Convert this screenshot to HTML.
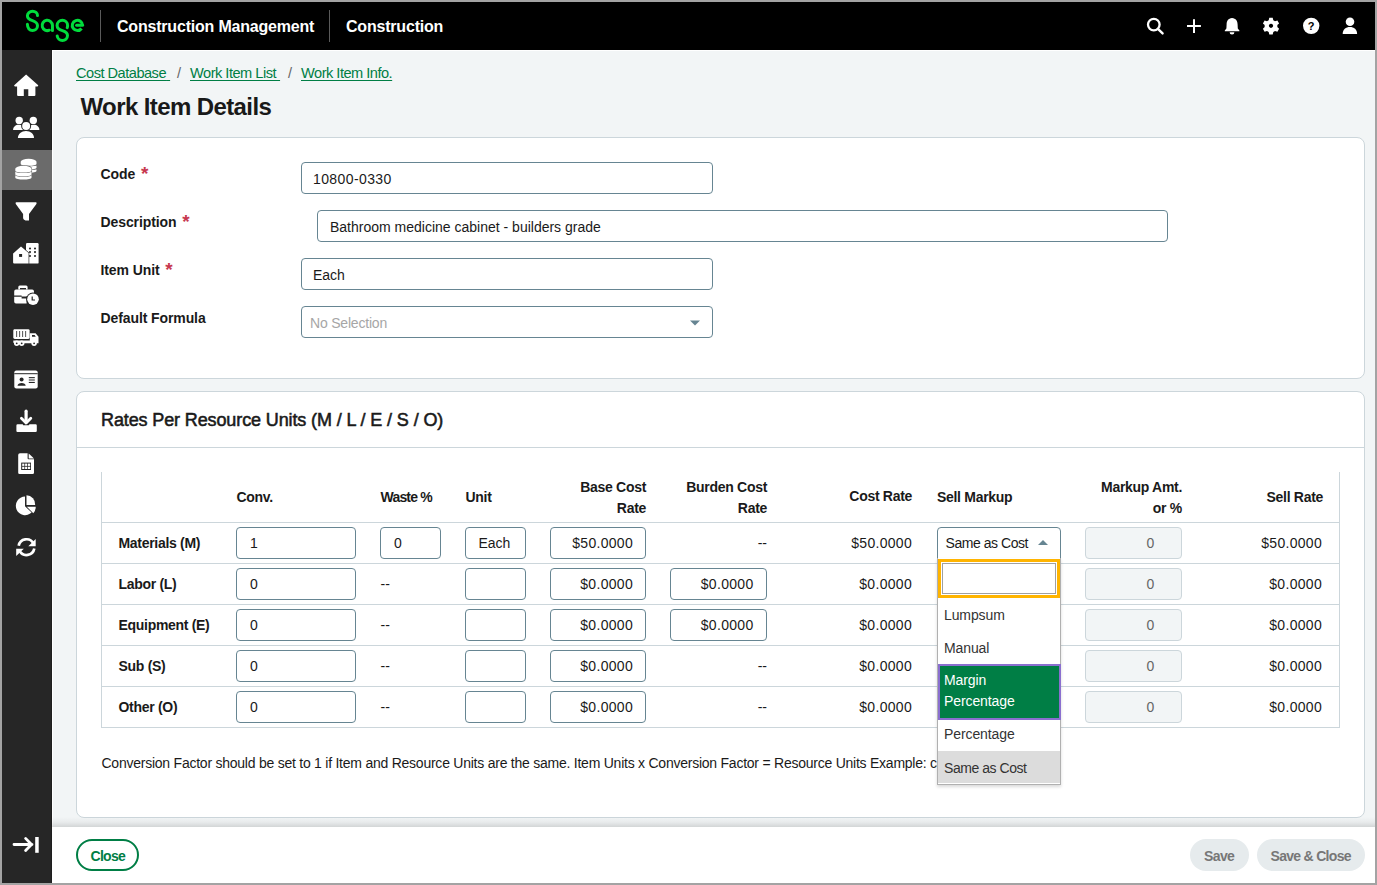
<!DOCTYPE html>
<html><head><meta charset="utf-8"><title>Work Item Details</title>
<style>
html,body{margin:0;padding:0;}
body{width:1377px;height:885px;position:relative;overflow:hidden;background:#a3a3a3;font-family:"Liberation Sans",sans-serif;color:#1a1a1a;}
.a{position:absolute;white-space:nowrap;}
#hdr{left:2px;top:2px;width:1373px;height:48px;background:#000;}
#side{left:2px;top:50px;width:50px;height:833px;background:#262626;}
#main{left:52px;top:50px;width:1323px;height:777px;background:#f2f5f6;box-shadow:inset 1px 1px 0 #fff;}
#foot{left:52px;top:827px;width:1323px;height:56px;background:#fff;}
.t14{font-size:14px;line-height:20px;}
.b{font-weight:700;}
.card{background:#fff;border:1px solid #ccd6db;border-radius:8px;box-sizing:border-box;}
.inp{background:#fff;border:1px solid #668592;border-radius:4px;box-sizing:border-box;}
.hl{height:1px;background:#ccd6db;}
.vl{width:1px;background:#ccd6db;}
.lnk{color:#007e45;text-decoration:underline;text-underline-offset:2px;}
.req{color:#c7384f;}
.btn{border-radius:16px;box-sizing:border-box;}
</style></head>
<body>
<div id="hdr" class="a"></div>
<div id="side" class="a"></div>
<div id="main" class="a"></div>
<div id="foot" class="a"></div>
<!-- HEADER -->
<svg class="a" style="left:0;top:0" width="100" height="50" viewBox="0 0 100 50"><g fill="none" stroke="#00dc3c" stroke-width="3" stroke-linecap="round">
<path d="M37.5,15.6 C37.5,13 35.3,11.3 32.5,11.3 C29.7,11.3 27.4,13.2 27.4,15.8 C27.4,18.6 29.6,19.7 32.5,20.6 C35.5,21.6 37.5,23.1 37.5,25.7 C37.5,28.5 35.2,30.5 32.5,30.5 C29.7,30.5 27.4,28.4 27.4,24.3"/>
<path d="M49.3,30.2 A5.15,5.15 0 1 1 52.45,25.35 L52.45,30.5"/>
<path d="M67.2,27.7 C67.5,27 67.6,26.2 67.6,25.4 C67.6,22.5 65.3,20.2 62.4,20.2 C59.5,20.2 57.1,22.5 57.1,25.4 C57.1,28.2 59.2,29.6 62.4,30.6 C65.6,31.6 67.5,33.1 67.5,35.6 C67.5,38.4 65.2,40.5 62.4,40.5 C59.7,40.5 57.5,38.6 57.2,35.9"/>
<path d="M76.6,25.35 L82.55,25.35"/><path d="M82.55,25.35 A5.15,5.15 0 1 0 81.55,28.5" stroke-linecap="butt"/>
</g></svg>
<div class="a" style="left:100px;top:10px;width:1px;height:32px;background:#5a5a5a"></div>
<div class="a" style="left:329px;top:10px;width:1px;height:32px;background:#5a5a5a"></div>
<div class="a b" style="left:117px;top:17px;font-size:16px;line-height:20px;color:#fff;letter-spacing:-0.2px">Construction Management</div>
<div class="a b" style="left:346px;top:17px;font-size:16px;line-height:20px;color:#fff;letter-spacing:-0.2px">Construction</div>
<svg class="a" style="left:1130px;top:0" width="245" height="50" viewBox="1130 0 245 50">
<g fill="none" stroke="#fff" stroke-width="2">
<circle cx="1153.8" cy="24.6" r="5.8" stroke-width="2.3"/>
<path d="M1157.9,28.9 L1162.6,33.4" stroke-linecap="round" stroke-width="2.4"/>
<path d="M1194,19.2 V32.9 M1187,26 H1200.9"/>
</g>
<g fill="#fff">
<path d="M1232,18 C1228.2,18.2 1226.6,21.2 1226.6,24.5 L1226.4,28.6 L1224.8,30.4 L1224.8,31.3 L1239.4,31.3 L1239.4,30.4 L1237.8,28.6 L1237.6,24.5 C1237.6,21.2 1235.9,18.2 1232,18 Z"/>
<path d="M1229.6,32.2 H1234.4 A2.4,2.2 0 0 1 1229.6,32.2 Z"/>
<path d="M1269.3,17.8 h3.4 l0.6,2.4 a6,6 0 0 1 1.7,1 l2.4,-0.7 1.7,2.9 -1.8,1.7 a6,6 0 0 1 0,2 l1.8,1.7 -1.7,2.9 -2.4,-0.7 a6,6 0 0 1 -1.7,1 l-0.6,2.4 h-3.4 l-0.6,-2.4 a6,6 0 0 1 -1.7,-1 l-2.4,0.7 -1.7,-2.9 1.8,-1.7 a6,6 0 0 1 0,-2 l-1.8,-1.7 1.7,-2.9 2.4,0.7 a6,6 0 0 1 1.7,-1 Z M1271,23.7 a2.1,2.1 0 1 0 0.01,0 Z" fill-rule="evenodd"/>
<circle cx="1311.2" cy="25.85" r="8.2"/>
<circle cx="1350" cy="21.8" r="4.3"/>
<path d="M1342.7,33.9 C1342.7,29.6 1345.8,27 1349.9,27 C1354,27 1357.1,29.6 1357.1,33.9 Z"/>
</g>
<text x="1311.2" y="29.6" font-family="Liberation Sans" font-weight="700" font-size="11" text-anchor="middle" fill="#000">?</text>
</svg>

<!-- SIDEBAR -->
<div class="a" style="left:51px;top:50px;width:1px;height:833px;background:#1e1e1e"></div>
<div class="a" style="left:2px;top:150px;width:50px;height:40px;background:#6b6b6b"></div>
<svg class="a" style="left:0;top:50px" width="52" height="833" viewBox="0 50 52 833">
<g fill="#fff">
<!-- home -->
<path d="M26.1,74.4 L38.2,85.3 Q38.4,86.3 37.4,86.6 L35.4,86.6 L35.4,95 Q35.4,96 34.4,96 L28.3,96 L28.3,89.3 L23.8,89.3 L23.8,96 L18.1,96 Q17.1,96 17.1,95 L17.1,86.6 L15,86.6 Q13.9,86.3 14.2,85.3 Z"/>
<!-- people -->
<circle cx="19.2" cy="120.4" r="3.7"/>
<circle cx="33.3" cy="120.4" r="3.7"/>
<path d="M13.1,130 C13.1,126.8 15.6,124.8 18.8,124.8 C22,124.8 24.5,126.8 24.5,130 Z"/>
<path d="M28,130 C28,126.8 30.5,124.8 33.7,124.8 C36.9,124.8 39.4,126.8 39.4,130 Z"/>
<circle cx="26.15" cy="126" r="5" fill="#262626"/>
<circle cx="26.15" cy="126" r="4"/>
<path d="M16.9,138.6 C16.9,133.6 20.8,130 26,130 C31.2,130 35,133.6 35,138.6 Z" fill="#262626"/>
<path d="M17.9,137.9 C17.9,133.9 21.4,131 26,131 C30.6,131 34,133.9 34,137.9 Z"/>
<!-- coins -->
<g stroke="#6b6b6b" stroke-width="1.1" paint-order="stroke">
<path d="M20.7,169.5 L20.7,171.1 A7.9,1.8 0 0 0 36.5,171.1 L36.5,169.5 Z"/>
<path d="M20.7,165.7 L20.7,167.7 A7.9,1.8 0 0 0 36.5,167.7 L36.5,165.7 Z"/>
<path d="M20.7,161.8 L20.7,163.9 A7.9,1.8 0 0 0 36.5,163.9 L36.5,161.8 A7.9,3 0 0 0 20.7,161.8 Z"/>
<path d="M15.3,175.1 L15.3,177.7 A8.1,1.8 0 0 0 31.5,177.7 L31.5,175.1 Z"/>
<path d="M15.3,171.3 L15.3,174.5 A8.1,1.8 0 0 0 31.5,174.5 L31.5,171.3 Z"/>
<path d="M15.3,168.75 L15.3,170.7 A8.1,1.8 0 0 0 31.5,170.7 L31.5,168.75 A8.1,2.9 0 0 0 15.3,168.75 Z"/>
</g>
<!-- filter -->
<path d="M16.3,202.3 Q15,202.6 15.8,204 L23.1,214 L23.1,218.3 Q23.3,219.4 25.5,220.6 L29,220.6 L29,214 L36.4,204 Q37.2,202.6 35.9,202.3 Z"/>
<!-- buildings -->
<rect x="26" y="243" width="12.6" height="20.6" rx="1.2"/>
<path d="M13.1,253.4 L21,246.6 L28.6,253.1 L28.6,263.6 L14.1,263.6 Q13.1,263.6 13.1,262.6 Z" stroke="#262626" stroke-width="1.3" paint-order="stroke"/>
<g fill="#262626"><rect x="19.1" y="254" width="3" height="2.9"/>
<circle cx="30" cy="248.5" r="1.05"/><circle cx="35" cy="248.5" r="1.05"/><circle cx="30" cy="252.1" r="1.05"/><circle cx="35" cy="252.1" r="1.05"/><circle cx="30" cy="256" r="1.05"/><circle cx="35" cy="256" r="1.05"/></g>
<!-- briefcase -->
<path d="M18.3,289.6 L18.3,286.9 Q18.3,285.4 19.8,285.4 L26.1,285.4 Q27.6,285.4 27.6,286.9 L27.6,289.6 L26,289.6 L26,288 L20,288 L20,289.6 Z"/>
<path d="M14.2,291.4 Q14.2,289.6 16,289.6 L32.2,289.6 Q34,289.6 34,291.4 L34,293.5 L26,296.5 L21.6,296.5 L21.6,295.5 L14.2,295.5 Z"/>
<path d="M14.2,296.8 L21.6,296.8 L21.6,298.4 L26.6,298.4 L26.6,303.6 L16,303.6 Q14.2,303.6 14.2,301.8 Z"/>
<circle cx="33" cy="299.2" r="6.8" fill="#262626"/>
<circle cx="33" cy="299.2" r="5.8"/>
<path d="M32.2,296.4 L32.2,300 L35,300" fill="none" stroke="#262626" stroke-width="1.2"/>
<!-- truck -->
<path d="M14.2,329.3 Q13.3,329.3 13.3,330.8 L13.3,337.3 Q13.3,338.9 14.8,338.9 L28.3,338.9 Q29.6,338.9 29.6,337.5 L29.6,330.6 Q29.6,329.3 28.2,329.3 Z"/>
<path d="M13.3,340.5 L29.8,340.5 L29.8,333.2 L35.6,333.2 L38.5,336.7 L38.5,343.2 L14.6,343.2 Q13.3,343.2 13.3,342 Z"/>
<circle cx="16.7" cy="343.3" r="2.7"/><circle cx="21.7" cy="343.3" r="2.7"/><circle cx="34.1" cy="343.3" r="2.7"/>
<g fill="#262626"><circle cx="16.7" cy="343.3" r="0.9"/><circle cx="21.7" cy="343.3" r="0.9"/><circle cx="34.1" cy="343.3" r="0.9"/>
<rect x="16.3" y="331" width="0.8" height="6"/><rect x="19.3" y="331" width="0.8" height="6"/><rect x="22.3" y="331" width="0.8" height="6"/><rect x="25.3" y="331" width="0.8" height="6"/>
<path d="M32,335 L34.6,335 L35.8,336.7 L32,336.7 Z"/></g>
<!-- id card -->
<rect x="14.3" y="370.6" width="23.4" height="17.9" rx="2"/>
<g fill="#262626"><rect x="14.3" y="373.2" width="23.4" height="1"/>
<circle cx="21.6" cy="379.5" r="2"/><path d="M17.5,385.8 Q18,383 21.6,383 Q25.2,383 25.7,385.8 Z"/>
<rect x="28.8" y="377.1" width="6" height="1.1"/><rect x="28.8" y="379.5" width="6" height="1"/><rect x="28.8" y="381.9" width="6" height="1.1"/></g>
<!-- download -->
<path d="M26.1,411.2 L26.1,422" stroke="#fff" stroke-width="3.2" stroke-linecap="round"/>
<path d="M21.4,418.2 L26.1,423 L30.8,418.2" fill="none" stroke="#fff" stroke-width="2.8" stroke-linecap="round" stroke-linejoin="round"/>
<path d="M16.8,424.2 L22.7,424.2 L23.2,425.3 L28.8,425.3 L29.5,424.2 L35.6,424.2 Q36.8,424.2 36.8,425.5 L36.8,430.9 Q36.8,432 35.6,432 L17.5,432 Q16.4,432 16.4,430.9 L16.4,425.5 Q16.4,424.2 17.6,424.2 Z"/>
<!-- spreadsheet -->
<path d="M20,453.2 L27.6,453.2 L27.6,458.3 Q27.6,459.3 28.6,459.3 L34,459.3 L34,472.8 Q34,474.1 32.6,474.1 L19.5,474.1 Q18.2,474.1 18.2,472.8 L18.2,455 Q18.2,453.2 20,453.2 Z"/>
<path d="M28.7,453.4 L34,458.4 L28.7,458.4 Z"/>
<g fill="#262626"><rect x="21.2" y="462.6" width="9.8" height="7.4"/></g>
<g fill="#fff"><rect x="22.2" y="463.6" width="2.2" height="2.3"/><rect x="25.1" y="463.6" width="2.2" height="2.3"/><rect x="28" y="463.6" width="2.2" height="2.3"/>
<rect x="22.2" y="466.7" width="2.2" height="2.3"/><rect x="25.1" y="466.7" width="2.2" height="2.3"/><rect x="28" y="466.7" width="2.2" height="2.3"/></g>
<!-- pie -->
<path d="M25,496.6 L25,506.2 L31.6,512.6 A9.3,9.3 0 1 1 25,496.6 Z"/>
<path d="M26.5,495.3 A9,9 0 0 1 35.2,504.9 L26.5,504.9 Z"/>
<path d="M26.8,506.7 L35.7,506.7 A9,9 0 0 1 33.3,513.2 Z"/>
<!-- sync -->
<path d="M18.7,545.8 A7.9,7.9 0 0 1 33.4,543.4" fill="none" stroke="#fff" stroke-width="2.7"/>
<path d="M35.7,538.9 L35.7,546.3 L28.3,546.3 Z"/>
<path d="M34.3,548.5 A7.9,7.9 0 0 1 19.6,550.9" fill="none" stroke="#fff" stroke-width="2.7"/>
<path d="M16.2,548.7 L23.8,548.7 L16.2,556 Z"/>
<!-- collapse -->
<path d="M14,844.5 L32,844.5 M25.6,838.4 L31.5,844.5 L25.6,850.5" fill="none" stroke="#fff" stroke-width="2.8" stroke-linecap="round" stroke-linejoin="round"/>
<rect x="35.2" y="837" width="3.5" height="15.8"/>
</g>
</svg>

<!-- BREADCRUMB / TITLE -->
<div class="a t14" style="left:76px;top:63px;font-size:14.6px;letter-spacing:-0.5px"><span class="lnk">Cost Database<span style="letter-spacing:0px">&nbsp;</span></span></div>
<div class="a t14" style="left:177px;top:63px;font-size:14.6px;color:#666">/</div>
<div class="a t14" style="left:190px;top:63px;font-size:14.6px;letter-spacing:-0.5px"><span class="lnk">Work Item List<span style="letter-spacing:0px">&nbsp;</span></span></div>
<div class="a t14" style="left:288px;top:63px;font-size:14.6px;color:#666">/</div>
<div class="a t14" style="left:301px;top:63px;font-size:14.6px;letter-spacing:-0.5px"><span class="lnk">Work Item Info.</span></div>
<div class="a b" style="left:80.5px;top:92px;font-size:24px;line-height:30px;letter-spacing:-0.6px;color:#191919">Work Item Details</div>
<!-- CARD 1 -->
<div class="a card" style="left:76px;top:137px;width:1289px;height:242px"></div>
<div class="a t14 b" style="left:100.5px;top:164px;letter-spacing:-0.1px">Code <span class="req" style="margin-left:2px;font-size:19px;line-height:0;position:relative;top:1px">*</span></div>
<div class="a t14 b" style="left:100.5px;top:212px;letter-spacing:-0.1px">Description <span class="req" style="margin-left:2px;font-size:19px;line-height:0;position:relative;top:1px">*</span></div>
<div class="a t14 b" style="left:100.5px;top:260px;letter-spacing:-0.1px">Item Unit <span class="req" style="margin-left:2px;font-size:19px;line-height:0;position:relative;top:1px">*</span></div>
<div class="a t14 b" style="left:100.5px;top:308px;letter-spacing:-0.1px">Default Formula</div>
<div class="a inp" style="left:301px;top:162px;width:412px;height:32px"></div>
<div class="a inp" style="left:317px;top:210px;width:851px;height:32px"></div>
<div class="a inp" style="left:301px;top:258px;width:412px;height:32px"></div>
<div class="a inp" style="left:301px;top:306px;width:412px;height:32px"></div>
<div class="a t14" style="left:313px;top:169px;letter-spacing:0.4px">10800-0330</div>
<div class="a t14" style="left:330px;top:217px">Bathroom medicine cabinet - builders grade</div>
<div class="a t14" style="left:313px;top:265px">Each</div>
<div class="a t14" style="left:310px;top:313px;color:#a6a6a6;letter-spacing:-0.2px">No Selection</div>
<svg class="a" style="left:689px;top:319px" width="12" height="8"><path d="M1,1.5 L11,1.5 L6,6.5 Z" fill="#668592"/></svg>

<!-- CARD 2 -->
<div class="a card" style="left:76px;top:391px;width:1289px;height:427px"></div>
<div class="a" style="left:101px;top:409px;font-size:18px;line-height:22px;letter-spacing:-0.12px;-webkit-text-stroke:0.55px #1a1a1a">Rates Per Resource Units (M / L / E / S / O)</div>
<div class="a hl" style="left:77px;top:447px;width:1287px"></div>
<div class="a vl" style="left:101px;top:472px;height:256px"></div>
<div class="a vl" style="left:1339px;top:472px;height:256px"></div>
<div class="a hl" style="left:101px;top:522px;width:1239px"></div>
<div class="a hl" style="left:101px;top:563px;width:1239px"></div>
<div class="a hl" style="left:101px;top:604px;width:1239px"></div>
<div class="a hl" style="left:101px;top:645px;width:1239px"></div>
<div class="a hl" style="left:101px;top:686px;width:1239px"></div>
<div class="a hl" style="left:101px;top:727px;width:1239px"></div>
<div class="a t14 b" style="left:236.5px;top:487px;letter-spacing:-0.3px">Conv.</div>
<div class="a t14 b" style="left:380.5px;top:487px;letter-spacing:-0.8px">Waste %</div>
<div class="a t14 b" style="left:465.5px;top:487px;letter-spacing:-0.3px">Unit</div>
<div class="a t14 b" style="right:731px;top:477px;text-align:right;letter-spacing:-0.3px">Base Cost</div>
<div class="a t14 b" style="right:731px;top:498px;text-align:right;letter-spacing:-0.3px">Rate</div>
<div class="a t14 b" style="right:610px;top:477px;text-align:right;letter-spacing:-0.3px">Burden Cost</div>
<div class="a t14 b" style="right:610px;top:498px;text-align:right;letter-spacing:-0.3px">Rate</div>
<div class="a t14 b" style="right:465px;top:486px;text-align:right;letter-spacing:-0.3px">Cost Rate</div>
<div class="a t14 b" style="left:937px;top:487px;letter-spacing:-0.3px">Sell Markup</div>
<div class="a t14 b" style="right:195px;top:477px;text-align:right;letter-spacing:-0.3px">Markup Amt.</div>
<div class="a t14 b" style="right:195px;top:498px;text-align:right;letter-spacing:-0.3px">or %</div>
<div class="a t14 b" style="right:54px;top:487px;text-align:right;letter-spacing:-0.3px">Sell Rate</div>
<div class="a t14 b" style="left:118.5px;top:533px;letter-spacing:-0.3px">Materials (M)</div>
<div class="a inp" style="left:236px;top:527px;width:120px;height:32px;"></div>
<div class="a t14" style="left:250px;top:533px;">1</div>
<div class="a inp" style="left:380px;top:527px;width:61px;height:32px;"></div>
<div class="a t14" style="left:394px;top:533px;">0</div>
<div class="a inp" style="left:465px;top:527px;width:61px;height:32px;"></div>
<div class="a t14" style="left:478.5px;top:533px;">Each</div>
<div class="a inp" style="left:550px;top:527px;width:96px;height:32px;"></div>
<div class="a t14" style="right:744px;top:533px;text-align:right;letter-spacing:0.3px">$50.0000</div>
<div class="a t14" style="right:610px;top:533px;text-align:right;">--</div>
<div class="a t14" style="right:465px;top:533px;text-align:right;letter-spacing:0.3px">$50.0000</div>
<div class="a inp" style="left:1085px;top:527px;width:97px;height:32px;background:#f2f5f6;border-color:#ccd6db"></div>
<div class="a t14" style="left:1146.5px;top:533px;color:#666">0</div>
<div class="a t14" style="right:55px;top:533px;text-align:right;letter-spacing:0.3px">$50.0000</div>
<div class="a t14 b" style="left:118.5px;top:574px;letter-spacing:-0.3px">Labor (L)</div>
<div class="a inp" style="left:236px;top:568px;width:120px;height:32px;"></div>
<div class="a t14" style="left:250px;top:574px;">0</div>
<div class="a t14" style="left:380.5px;top:574px;">--</div>
<div class="a inp" style="left:465px;top:568px;width:61px;height:32px;"></div>
<div class="a inp" style="left:550px;top:568px;width:96px;height:32px;"></div>
<div class="a t14" style="right:744px;top:574px;text-align:right;letter-spacing:0.3px">$0.0000</div>
<div class="a inp" style="left:670px;top:568px;width:97px;height:32px;"></div>
<div class="a t14" style="right:623.5px;top:574px;text-align:right;letter-spacing:0.3px">$0.0000</div>
<div class="a t14" style="right:465px;top:574px;text-align:right;letter-spacing:0.3px">$0.0000</div>
<div class="a inp" style="left:1085px;top:568px;width:97px;height:32px;background:#f2f5f6;border-color:#ccd6db"></div>
<div class="a t14" style="left:1146.5px;top:574px;color:#666">0</div>
<div class="a t14" style="right:55px;top:574px;text-align:right;letter-spacing:0.3px">$0.0000</div>
<div class="a t14 b" style="left:118.5px;top:615px;letter-spacing:-0.3px">Equipment (E)</div>
<div class="a inp" style="left:236px;top:609px;width:120px;height:32px;"></div>
<div class="a t14" style="left:250px;top:615px;">0</div>
<div class="a t14" style="left:380.5px;top:615px;">--</div>
<div class="a inp" style="left:465px;top:609px;width:61px;height:32px;"></div>
<div class="a inp" style="left:550px;top:609px;width:96px;height:32px;"></div>
<div class="a t14" style="right:744px;top:615px;text-align:right;letter-spacing:0.3px">$0.0000</div>
<div class="a inp" style="left:670px;top:609px;width:97px;height:32px;"></div>
<div class="a t14" style="right:623.5px;top:615px;text-align:right;letter-spacing:0.3px">$0.0000</div>
<div class="a t14" style="right:465px;top:615px;text-align:right;letter-spacing:0.3px">$0.0000</div>
<div class="a inp" style="left:1085px;top:609px;width:97px;height:32px;background:#f2f5f6;border-color:#ccd6db"></div>
<div class="a t14" style="left:1146.5px;top:615px;color:#666">0</div>
<div class="a t14" style="right:55px;top:615px;text-align:right;letter-spacing:0.3px">$0.0000</div>
<div class="a t14 b" style="left:118.5px;top:656px;letter-spacing:-0.3px">Sub (S)</div>
<div class="a inp" style="left:236px;top:650px;width:120px;height:32px;"></div>
<div class="a t14" style="left:250px;top:656px;">0</div>
<div class="a t14" style="left:380.5px;top:656px;">--</div>
<div class="a inp" style="left:465px;top:650px;width:61px;height:32px;"></div>
<div class="a inp" style="left:550px;top:650px;width:96px;height:32px;"></div>
<div class="a t14" style="right:744px;top:656px;text-align:right;letter-spacing:0.3px">$0.0000</div>
<div class="a t14" style="right:610px;top:656px;text-align:right;">--</div>
<div class="a t14" style="right:465px;top:656px;text-align:right;letter-spacing:0.3px">$0.0000</div>
<div class="a inp" style="left:1085px;top:650px;width:97px;height:32px;background:#f2f5f6;border-color:#ccd6db"></div>
<div class="a t14" style="left:1146.5px;top:656px;color:#666">0</div>
<div class="a t14" style="right:55px;top:656px;text-align:right;letter-spacing:0.3px">$0.0000</div>
<div class="a t14 b" style="left:118.5px;top:697px;letter-spacing:-0.3px">Other (O)</div>
<div class="a inp" style="left:236px;top:691px;width:120px;height:32px;"></div>
<div class="a t14" style="left:250px;top:697px;">0</div>
<div class="a t14" style="left:380.5px;top:697px;">--</div>
<div class="a inp" style="left:465px;top:691px;width:61px;height:32px;"></div>
<div class="a inp" style="left:550px;top:691px;width:96px;height:32px;"></div>
<div class="a t14" style="right:744px;top:697px;text-align:right;letter-spacing:0.3px">$0.0000</div>
<div class="a t14" style="right:610px;top:697px;text-align:right;">--</div>
<div class="a t14" style="right:465px;top:697px;text-align:right;letter-spacing:0.3px">$0.0000</div>
<div class="a inp" style="left:1085px;top:691px;width:97px;height:32px;background:#f2f5f6;border-color:#ccd6db"></div>
<div class="a t14" style="left:1146.5px;top:697px;color:#666">0</div>
<div class="a t14" style="right:55px;top:697px;text-align:right;letter-spacing:0.3px">$0.0000</div>
<div class="a" style="left:937px;top:527px;width:124px;height:32px;box-sizing:border-box;border:1px solid #668592;border-radius:4px 4px 0 0;background:#fff"></div>
<div class="a t14" style="left:945.5px;top:533px;letter-spacing:-0.45px">Same as Cost</div>
<svg class="a" style="left:1036px;top:538px" width="14" height="9"><path d="M2,7 L12,7 L7,2 Z" fill="#668592"/></svg>
<div class="a t14" style="left:101.5px;top:753px;letter-spacing:-0.24px">Conversion Factor should be set to 1 if Item and Resource Units are the same. Item Units x Conversion Factor = Resource Units Example: case = 12 ea</div>
<div class="a" style="left:937px;top:558px;width:124px;height:227px;box-sizing:border-box;background:#fff;border:1px solid #b0b0b0;border-top:none;box-shadow:0 2px 3px rgba(0,0,0,0.15)"></div>
<div class="a" style="left:938px;top:559px;width:122px;height:39px;box-sizing:border-box;border:3px solid #ffb400;background:#fff"></div>
<div class="a" style="left:942px;top:563px;width:114px;height:31px;box-sizing:border-box;border:1px solid #a0a0a0;background:#fff"></div>
<div class="a t14" style="left:944px;top:605px;color:#333;letter-spacing:-0.1px">Lumpsum</div>
<div class="a t14" style="left:944px;top:638px;color:#333;letter-spacing:-0.1px">Manual</div>
<div class="a" style="left:938px;top:664px;width:123px;height:56px;box-sizing:border-box;border:2px solid #8a6fcf;background:#007e45"></div>
<div class="a t14" style="left:944px;top:670px;color:#fff;letter-spacing:-0.1px">Margin</div>
<div class="a t14" style="left:944px;top:691px;color:#fff;letter-spacing:-0.1px">Percentage</div>
<div class="a t14" style="left:944px;top:724px;color:#333;letter-spacing:-0.1px">Percentage</div>
<div class="a" style="left:938px;top:751px;width:122px;height:32px;background:#dcdcdc"></div>
<div class="a t14" style="left:944px;top:758px;color:#333;letter-spacing:-0.45px">Same as Cost</div>
<!-- FOOTER -->
<div class="a" style="left:52px;top:817px;width:1323px;height:10px;background:linear-gradient(to bottom,rgba(0,0,0,0) 0%,rgba(0,0,0,0.04) 50%,rgba(0,0,0,0.13) 100%)"></div>
<div class="a btn" style="left:76px;top:839px;width:63px;height:32px;border:2px solid #007e45"></div>
<div class="a t14 b" style="left:90.5px;top:846px;font-size:14px;color:#007e45;letter-spacing:-0.7px">Close</div>
<div class="a btn" style="left:1190px;top:839px;width:59px;height:32px;background:#e6ebed"></div>
<div class="a t14 b" style="left:1204px;top:846px;font-size:14px;color:#777;letter-spacing:-0.6px">Save</div>
<div class="a btn" style="left:1257px;top:839px;width:108px;height:32px;background:#e6ebed"></div>
<div class="a t14 b" style="left:1270.5px;top:846px;font-size:14px;color:#777;letter-spacing:-0.7px">Save &amp; Close</div>

<!--CONTENT-->
</body></html>
